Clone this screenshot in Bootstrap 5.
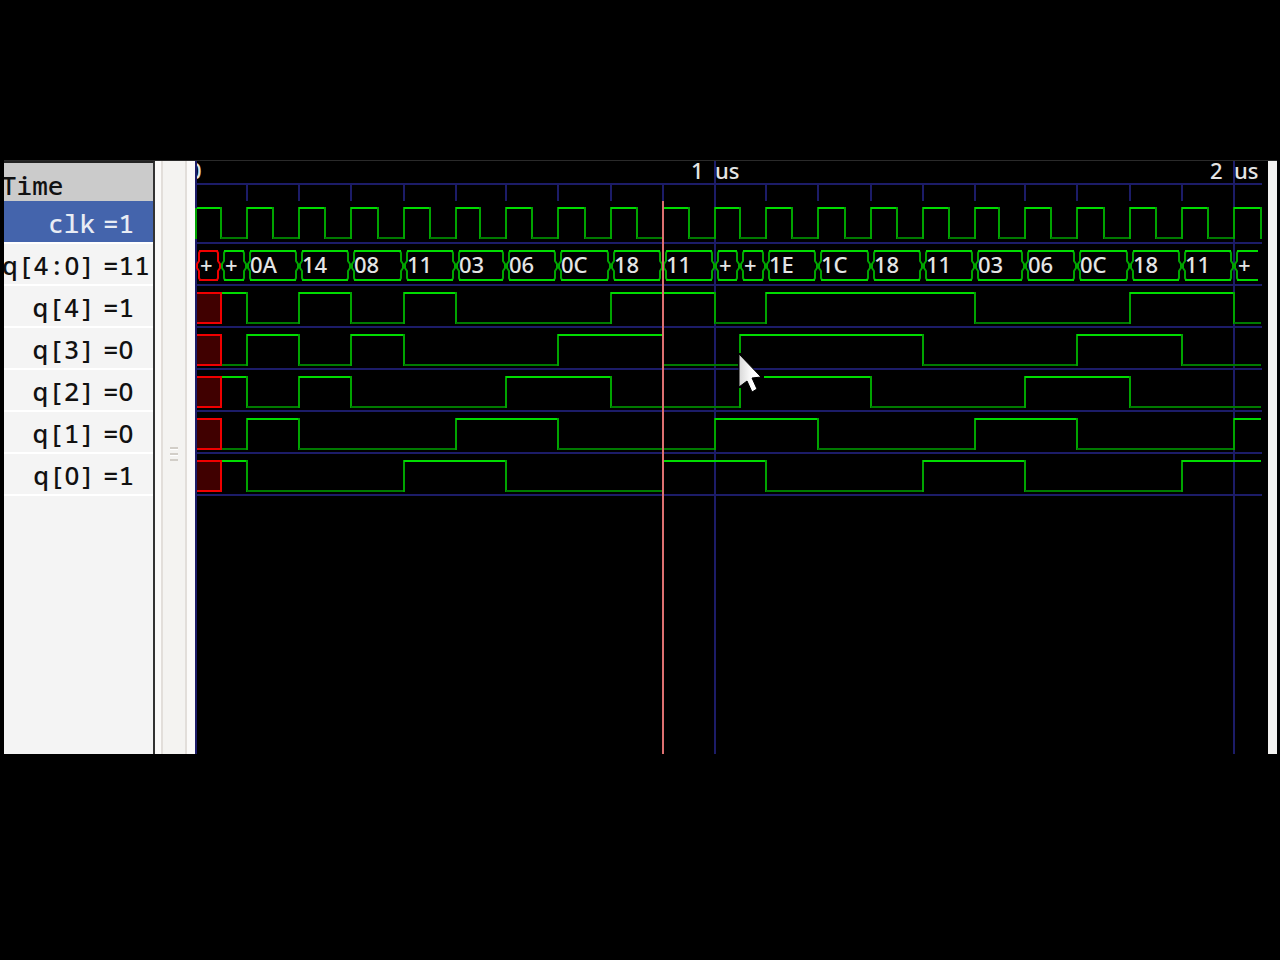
<!DOCTYPE html>
<html lang="en">
<head>
<meta charset="utf-8">
<meta name="viewport" content="width=device-width, initial-scale=1">
<title>Waveform viewer</title>
<link href="https://cdn.jsdelivr.net/npm/bootstrap@5.3.0/dist/css/bootstrap.min.css" rel="stylesheet">
<style>
  body { background: #000; padding: 160px 3px 206px 4px; }
  .viewer { border-top: 1px solid #2a2a2a; }
  .signals { width: 151px; background: #f4f4f4; border-right: 2px solid #333; border-top: 2px solid #222; }
  .signals table { width: 152px; margin-left: -3px; table-layout: fixed; border-collapse: collapse; color: #111;
    font: 500 26px/38px "Droid Sans Mono", "Noto Sans Mono", "DejaVu Sans Mono", monospace; white-space: nowrap; }
  .signals th, .signals td { padding: 2px 0 0; font-weight: 500; height: 42px; border-bottom: 2px solid #fff; }
  .signals thead th { height: 38px; line-height: 32px; padding-top: 6px; border: 0; background: #cbcbcb; }
  .signals tbody th { text-align: right; }
  .signals tbody td { padding-left: 8px; }
  .signals .selected > * { background: #4464ac; color: #e8ecf4; }
  .plain-zero { font-family: "Noto Sans", sans-serif; }
  .splitter { width: 40px; background: #f4f3f1; border: solid #fbfaf9; border-width: 0 8px 0 6px; }
  .splitter-face { border: solid #e2deda; border-width: 0 2px; }
  .grip { width: 8px; height: 14px; background: repeating-linear-gradient(#d2cec8 0 2px, #fff 2px 3px, #f4f3f1 3px 6px); }
  .waves { min-width: 0; }
  .waves svg { min-height: 340px; font-family: "Noto Sans", sans-serif; font-size: 22px; font-weight: 500; fill: #e4e4e4; }
  .scrollbar-edge { width: 9px; background: #f3f2f1; }
  .grid-line { stroke: #1c1c68; stroke-width: 2; }
  .hi { stroke: #00dc00; stroke-width: 2; }
  .lo { stroke: #007a00; stroke-width: 2; }
  .edge { stroke: #00a400; stroke-width: 2; fill: none; }
  .unknown { stroke: #f00000; stroke-width: 2; fill: #400000; }
  .marker { stroke: #dc7070; stroke-width: 2; }
</style>
<script src="https://cdn.jsdelivr.net/npm/bootstrap@5.3.0/dist/js/bootstrap.bundle.min.js"></script>
</head>
<body class="min-vh-100 d-flex">
<main class="viewer d-flex flex-fill overflow-hidden">
  <section class="signals flex-shrink-0 overflow-hidden" aria-label="Signals">
    <table>
      <colgroup><col style="width:94px"><col></colgroup>
      <thead><tr><th colspan="2">Time</th></tr></thead>
      <tbody>
        <tr class="selected"><th scope="row">clk</th><td>=1</td></tr>
        <tr><th scope="row">q[4:<span class="plain-zero">0</span>]</th><td>=11</td></tr>
        <tr><th scope="row">q[4]</th><td>=1</td></tr>
        <tr><th scope="row">q[3]</th><td>=<span class="plain-zero">0</span></td></tr>
        <tr><th scope="row">q[2]</th><td>=<span class="plain-zero">0</span></td></tr>
        <tr><th scope="row">q[1]</th><td>=<span class="plain-zero">0</span></td></tr>
        <tr><th scope="row">q[<span class="plain-zero">0</span>]</th><td>=1</td></tr>
      </tbody>
    </table>
  </section>
  <div class="splitter flex-shrink-0 d-flex">
    <div class="splitter-face flex-fill d-flex align-items-center justify-content-center"><div class="grip mb-2"></div></div>
  </div>
  <section class="waves flex-fill d-flex overflow-hidden" aria-label="Waves">
    <svg id="waves" width="100%" height="100%"></svg>
  </section>
  <div class="scrollbar-edge flex-shrink-0"></div>
</main>
<script>
  // Clock edges, in pixels from the start of the time axis
  const T = [0,25,51,77,103,129,155,182,208,234,260,284,310,336,362,389,415,441,467,493,519,
             544,570,596,622,649,675,701,727,753,779,803,829,855,881,908,934,960,986,1012,1038,1065];
  const LAST = 41;
  const out = [];
  const line = (x1, y1, x2, y2, c) => out.push(`<line x1="${x1}" y1="${y1}" x2="${x2}" y2="${y2}" class="${c}"/>`);
  const text = (x, y, s) => out.push(`<text x="${x}" y="${y}">${s}</text>`);

  // Time axis
  text(-7, 18, '0'); text(495, 18, '1'); text(519, 18, 'us'); text(1014, 18, '2'); text(1038, 18, 'us');
  line(0, 23, 1066, 23, 'grid-line');
  for (let k = 2; k < 40; k += 2) line(T[k], 23, T[k], 40, 'grid-line');

  // A one-bit trace: first level, then the clock edges at which it toggles
  function trace(y, level, start, toggles) {
    let from = start;
    for (const to of [...toggles, LAST]) {
      const yy = level ? y : y + 30;
      line(T[from], yy, T[to], yy, level ? 'hi' : 'lo');
      if (to < LAST) line(T[to], y - 1, T[to], y + 31, 'edge');
      level = !level; from = to;
    }
  }
  for (let i = 0; i < 7; i++) line(0, 82 + i * 42, 1066, 82 + i * 42, 'grid-line');
  for (const x of [519, 1038]) line(x, 0, x, '100%', 'grid-line');
  trace(47, true, 0, Array.from({length: 40}, (_, i) => i + 1));
  line(T[41], 46, T[41], 78, 'edge');
  const bits = [
    [132, true,  [2,4,6,8,10,16,20,22,30,36,40]],
    [174, false, [2,4,6,8,14,18,21,28,34,38]],
    [216, true,  [2,4,6,12,16,21,26,32,36]],
    [258, false, [2,4,10,14,20,24,30,34,40]],
    [300, true,  [2,8,12,18,22,28,32,38]]
  ];
  for (const [y, level, toggles] of bits) {
    trace(y, level, 1, toggles);
    out.push(`<rect x="0" y="${y}" width="25" height="30" class="unknown"/>`);
  }
  line(0, 0, 0, '100%', 'grid-line');
  line(0, 47, 0, 78, 'edge');
  // Clear space round the pointer
  out.push('<rect x="542" y="192" width="26" height="35" fill="#000"/>');
  line(542, 208, 568, 208, 'grid-line');

  // Bus: value and the edge at which it starts
  const bus = [['+',0],['+',1],['0A',2],['14',4],['08',6],['11',8],['03',10],['06',12],['0C',14],['18',16],
    ['11',18],['+',20],['+',21],['1E',22],['1C',24],['18',26],['11',28],['03',30],['06',32],['0C',34],
    ['18',36],['11',38],['+',40]];
  bus.forEach(([s, k], i) => {
    const a = T[k], open = i === bus.length - 1, b = open ? 1065 : T[bus[i + 1][1]];
    const red = i === 0 ? ' style="stroke:#f00000"' : '';
    const side = (x, d) => out.push(`<path d="M${x + 4*d} 90L${x + 3*d} 92V100L${x + d} 103V107L${x + 3*d} 110V117L${x + 4*d} 119" class="edge"${red}/>`);
    side(a, 1);
    if (!open) side(b, -1);
    for (const y of [90, 119]) out.push(`<line x1="${a + 3}" y1="${y}" x2="${b - 3}" y2="${y}" class="hi"${red}/>`);
    text(a + (s === '+' ? 4 : 3), 112, s);
  });

  // Primary marker and pointer
  line(467, 40, 467, '100%', 'marker');
  out.push(`<defs><linearGradient id="ptr"><stop offset="0" stop-color="#d8d8d8"/><stop offset=".6" stop-color="#fff"/></linearGradient></defs>
    <path d="M543 193V226L551 220L556 231L561 228L556 217L565 216Z" fill="url(#ptr)" stroke="#000"/>`);
  document.getElementById('waves').innerHTML = `<g transform="translate(1 0)">${out.join('')}</g>`;
</script>
</body>
</html>
